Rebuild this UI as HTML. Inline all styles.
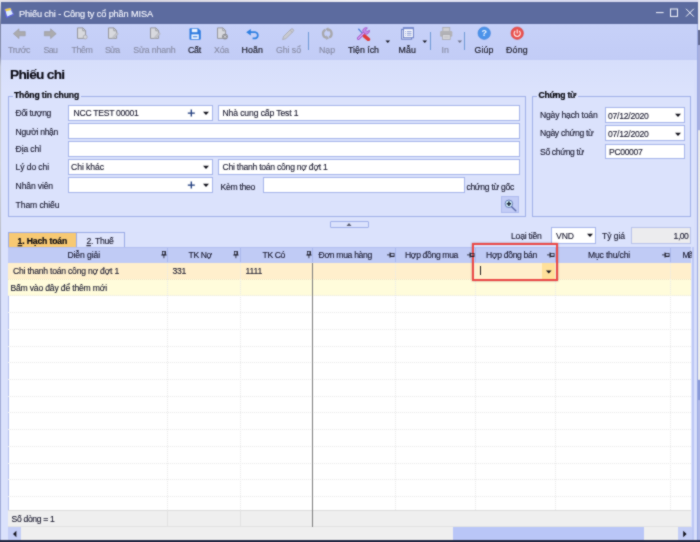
<!DOCTYPE html>
<html lang="vi"><head><meta charset="utf-8"><title>Phiếu chi - Công ty cổ phần MISA</title>
<style>
html,body{margin:0;padding:0;background:#e9e8ee;}
body{width:700px;height:542px;overflow:hidden;font-family:"Liberation Sans",sans-serif;}
#app{filter:url(#soft);position:relative;width:700px;height:542px;overflow:hidden;background:#e9e8ee;}
#app div,#app svg{position:absolute;box-sizing:border-box;}
.t{-webkit-text-stroke:0.12px currentColor;white-space:pre;font-family:"Liberation Sans",sans-serif;}
.t u{text-decoration:underline;text-underline-offset:1px;text-decoration-thickness:0.7px;}
.inp{background:#fff;border:1px solid #a6b5ea;}
.fs{border:1px solid #a0b0e8;}
.vsep{width:1px;background:#6f9ad6;}
.hd{background:#c0cbf5;border-right:1px solid #aab8ea;border-bottom:1px solid #aab8ea;border-top:1px solid #b4c0ee;}
.vl{width:0;border-left:1px dotted #e9e9e9;}
.hl{height:0;border-top:1px dotted #e9e9e9;}

</style></head>
<body>
<svg width="0" height="0" style="position:absolute"><defs><filter id="soft" x="0" y="0" width="100%" height="100%" color-interpolation-filters="sRGB"><feConvolveMatrix order="3" kernelMatrix="1 2 1 2 12 2 1 2 1" divisor="24" edgeMode="duplicate" preserveAlpha="true"/></filter></defs></svg>
<div id="app">
<!-- outside strips -->
<div style="left:0;top:0;width:700px;height:2.2px;background:linear-gradient(90deg,#e4e2ea,#d9d6e2 4%,#cfcbd9 10%,#e8e7ee 42%,#eeeef4 50%,#d9dbf0 75%,#d6d8ee)"></div>
<div style="left:0;top:2px;width:1.2px;height:540px;background:linear-gradient(#e4e4ec 0,#8088a8 4%,#8890ac 10%,#c4c8d6 12%,#cfd3dc 30%,#b8bcc8 45%,#a3add6 60%,#a0abd8)"></div>
<div style="left:1px;top:24px;width:0.9px;height:517px;background:#9ba8da"></div>
<div style="left:697.8px;top:0;width:2.2px;height:542px;background:linear-gradient(#e8e8f0 0,#e8e8f0 5.5%,#646c94 5.6%,#646c94 8.3%,#a8b0e0 8.4%,#a8b0e0 24%,#e9e9e9 24.1%,#ececec 70%,#8898d8 70.1%,#8898d8 73.8%,#b0b8e8 73.9%,#b0b8e8 100%)"></div>
<!-- window -->
<div id="win" style="left:1.2px;top:1.8px;width:696.5px;height:538.9px;background:#dbe2fc"></div>
<div id="titlebar" style="left:1.2px;top:2px;width:696.5px;height:21.6px;background:#5c6b9f"></div>
<div id="toolbar" style="left:1.2px;top:23.6px;width:696.5px;height:36px;background:linear-gradient(#c7d1f8,#c2ccf6)"></div>
<div style="left:1.2px;top:59.6px;width:696.5px;height:30px;background:linear-gradient(#d6defb,#dbe2fc)"></div>
<!-- title icon -->
<svg style="left:3px;top:6px" width="12" height="13" viewBox="0 0 12 13"><path d="M1.6 3.2L7.4 2L10.6 8.4L3.6 11.6Z" fill="#dcebff" stroke="#6a6fe0" stroke-width="0.9"/><path d="M1.6 3.2L7.4 2L8.3 4L2.3 5.4Z" fill="#f4d247"/><path d="M1.6 3.4L3.6 11.6L10.4 8.6" fill="none" stroke="#5a5fdc" stroke-width="1.1"/></svg>
<!-- window buttons -->
<svg style="left:650px;top:5px" width="50" height="16" viewBox="0 0 50 16"><g stroke="#f4f5fc" stroke-width="1" fill="none"><path d="M6 7.6H13.6"/><rect x="20.5" y="4" width="7" height="7.4"/><path d="M36 3.8L43.8 11.6M43.8 3.8L36 11.6"/></g></svg>
<!-- fieldsets -->
<div class="fs" style="left:8px;top:96px;width:518.2px;height:120.5px"></div>
<div style="left:12.5px;top:92px;width:68px;height:9px;background:#dbe2fc"></div>
<div class="fs" style="left:532.2px;top:96px;width:158.9px;height:120.5px"></div>
<div style="left:536.5px;top:92px;width:41px;height:9px;background:#dbe2fc"></div>
<!-- inputs left -->
<div class="inp" style="left:68px;top:105.3px;width:144.8px;height:15.6px"></div>
<div class="inp" style="left:217.6px;top:105.3px;width:302.2px;height:15.6px"></div>
<div class="inp" style="left:68px;top:123.3px;width:451.8px;height:15.6px"></div>
<div class="inp" style="left:68px;top:141.3px;width:451.8px;height:15.6px"></div>
<div class="inp" style="left:68px;top:159.4px;width:144.8px;height:15.6px"></div>
<div class="inp" style="left:217.6px;top:159.4px;width:302.2px;height:15.6px"></div>
<div class="inp" style="left:68px;top:177.4px;width:144.8px;height:15.6px"></div>
<div class="inp" style="left:263.2px;top:177.4px;width:201.6px;height:15.6px"></div>
<!-- inputs right -->
<div class="inp" style="left:605.2px;top:107.2px;width:79.8px;height:15.8px"></div>
<div class="inp" style="left:605.2px;top:125.4px;width:79.8px;height:15.8px"></div>
<div class="inp" style="left:605.2px;top:143.7px;width:79.8px;height:15.8px"></div>
<!-- combo glyphs -->
<svg style="left:186px;top:108px" width="26" height="11" viewBox="0 0 26 11"><path d="M5.3 1.6V8.6M1.8 5.1H8.8" stroke="#1d3a7c" stroke-width="1.3" fill="none"/><path d="M17 3.8H23L20 7Z" fill="#15151f"/></svg>
<svg style="left:186px;top:162px" width="26" height="11" viewBox="0 0 26 11"><path d="M17 3.8H23L20 7Z" fill="#15151f"/></svg>
<svg style="left:186px;top:180px" width="26" height="11" viewBox="0 0 26 11"><path d="M5.3 1.6V8.6M1.8 5.1H8.8" stroke="#1d3a7c" stroke-width="1.3" fill="none"/><path d="M17 3.8H23L20 7Z" fill="#15151f"/></svg>
<svg style="left:672px;top:110px" width="12" height="11" viewBox="0 0 12 11"><path d="M3 3.8H9L6 7Z" fill="#15151f"/></svg>
<svg style="left:672px;top:128.7px" width="12" height="11" viewBox="0 0 12 11"><path d="M3 3.8H9L6 7Z" fill="#15151f"/></svg>
<!-- magnifier button -->
<div style="left:501px;top:195.6px;width:17.8px;height:17.2px;background:#c2ccf6;border:1px solid #aebbee"></div>
<svg style="left:503px;top:197.5px" width="15" height="15" viewBox="0 0 15 15"><circle cx="5.9" cy="5.8" r="3.8" fill="#cdeefa" stroke="#6f80ba" stroke-width="1"/><path d="M3.7 5.8H8.1M5.9 3.6V8" stroke="#1e2638" stroke-width="1.5"/><path d="M8.6 8.8L12.8 12.8" stroke="#5a6aa8" stroke-width="1.4" stroke-linecap="round"/></svg>
<!-- collapse button -->
<div style="left:330px;top:221px;width:38.6px;height:6.6px;background:#dbe2fc;border:1px solid #9fafe8;border-radius:1px"></div>
<svg style="left:345px;top:222px" width="8" height="5" viewBox="0 0 8 5"><path d="M1.5 4L4 1L6.5 4Z" fill="#555a70"/></svg>
<!-- currency -->
<div class="inp" style="left:550.6px;top:227.4px;width:45.6px;height:16.2px"></div>
<svg style="left:583.6px;top:230.4px" width="12" height="11" viewBox="0 0 12 11"><path d="M3 3.8H9L6 7Z" fill="#15151f"/></svg>
<div style="left:631px;top:227.4px;width:60.2px;height:16.2px;background:#ececee;border:1px solid #b9c3ea"></div>
<!-- tabs -->
<div style="left:7.6px;top:232.2px;width:68.7px;height:15px;background:#f7c973;border:1px solid #9aabe6;border-bottom:none;border-right:none"></div>
<div style="left:76.3px;top:232.2px;width:48.5px;height:15px;background:#dee4fc;border:1px solid #9aabe6;border-bottom:none"></div>
<!-- grid -->
<div id="grid" style="left:7.6px;top:246.8px;width:683.9px;height:293.8px;background:#fff;border-left:1px solid #b4c0ee"></div>
<!-- grid header cells -->
<div style="left:8.4px;top:246.8px;width:683.1px;height:15.8px;background:#c0cbf5;border-top:1px solid #b3bff0"></div>
<div style="left:167.1px;top:247.5px;width:1px;height:14.6px;background:#a9b7ec"></div>
<div style="left:239.5px;top:247.5px;width:1px;height:14.6px;background:#a9b7ec"></div>
<div style="left:311.8px;top:247.5px;width:1px;height:14.6px;background:#a9b7ec"></div>
<div style="left:395.1px;top:247.5px;width:1px;height:14.6px;background:#a9b7ec"></div>
<div style="left:475.1px;top:247.5px;width:1px;height:14.6px;background:#a9b7ec"></div>
<div style="left:555.0px;top:247.5px;width:1px;height:14.6px;background:#a9b7ec"></div>
<div style="left:669.5px;top:247.5px;width:1px;height:14.6px;background:#a9b7ec"></div>
<!-- rows -->
<div style="left:8.4px;top:262.6px;width:683.1px;height:16.2px;background:#ffefcc"></div>
<div style="left:8.4px;top:278.8px;width:683.1px;height:16.8px;background:#fffcdb"></div>
<!-- dotted h lines -->
<div class="hl" style="left:8.4px;top:278.6px;width:683px;border-top-color:#efe3c4"></div>
<div class="hl" style="left:8.4px;top:295.4px;width:683px"></div>
<div class="hl" style="left:8.4px;top:312.2px;width:683px"></div>
<div class="hl" style="left:8.4px;top:328.9px;width:683px"></div>
<div class="hl" style="left:8.4px;top:345.6px;width:683px"></div>
<div class="hl" style="left:8.4px;top:362.3px;width:683px"></div>
<div class="hl" style="left:8.4px;top:379px;width:683px"></div>
<div class="hl" style="left:8.4px;top:395.7px;width:683px"></div>
<div class="hl" style="left:8.4px;top:412.4px;width:683px"></div>
<div class="hl" style="left:8.4px;top:429.1px;width:683px"></div>
<div class="hl" style="left:8.4px;top:445.8px;width:683px"></div>
<div class="hl" style="left:8.4px;top:462.5px;width:683px"></div>
<div class="hl" style="left:8.4px;top:479.2px;width:683px"></div>
<div class="hl" style="left:8.4px;top:495.9px;width:683px"></div>
<!-- dotted v lines -->
<div class="vl" style="left:167.1px;top:262.6px;height:247.5px"></div>
<div class="vl" style="left:239.5px;top:262.6px;height:247.5px"></div>
<div class="vl" style="left:395.1px;top:262.6px;height:247.5px"></div>
<div class="vl" style="left:475.1px;top:262.6px;height:247.5px"></div>
<div class="vl" style="left:555.0px;top:262.6px;height:247.5px"></div>
<div class="vl" style="left:669.5px;top:262.6px;height:247.5px"></div>
<!-- footer -->
<div style="left:8.4px;top:510px;width:683.1px;height:17px;background:#efefef;border-top:1px solid #dcdcdc;border-bottom:1px solid #e2e2e2"></div>
<div style="left:167.1px;top:510px;width:1px;height:17px;background:#e2e2e2"></div>
<div style="left:239.5px;top:510px;width:1px;height:17px;background:#e2e2e2"></div>
<!-- frozen column line -->
<div style="left:312px;top:262.6px;width:1.2px;height:264.4px;background:#7d7d7d"></div>
<!-- scrollbar -->
<div style="left:8.4px;top:527px;width:683.1px;height:13.6px;background:#efefef"></div>
<div style="left:8.4px;top:527px;width:12.8px;height:13.6px;background:#c4cef6"></div>
<div style="left:678px;top:527px;width:13.5px;height:13.6px;background:#c4cef6"></div>
<div style="left:452.5px;top:527px;width:191.5px;height:13.6px;background:#b9c6f7"></div>
<svg style="left:12px;top:530px" width="6" height="8" viewBox="0 0 6 8"><path d="M4.4 0.8V7.2L1 4Z" fill="#15151f"/></svg>
<svg style="left:682px;top:530px" width="6" height="8" viewBox="0 0 6 8"><path d="M1.2 0.8V7.2L4.6 4Z" fill="#15151f"/></svg>
<!-- right band -->
<div style="left:691.5px;top:247px;width:2.4px;height:293.6px;background:#bdc8f5"></div>
<div style="left:693.8px;top:61px;width:3.4px;height:479.6px;background:#d8dffb"></div>
<div style="left:697.2px;top:23.8px;width:0.6px;height:516.8px;background:#9aa9e2"></div>

<!-- cell editor -->
<div style="left:476.1px;top:262.6px;width:79.4px;height:16px;background:#ffefcc"></div>
<div style="left:542.4px;top:262.6px;width:13.1px;height:16px;background:#ffe09a"></div>
<div style="left:480px;top:266px;width:1px;height:9px;background:#222"></div>
<svg style="left:545px;top:268.5px" width="8" height="6" viewBox="0 0 8 6"><path d="M1 1.5H6.6L3.8 4.6Z" fill="#15151f"/></svg>
<!-- red highlight -->
<div style="left:472.2px;top:243.4px;width:85.8px;height:37.6px;border:2.8px solid #ea4a48;box-shadow:0 0 2px rgba(120,40,40,.45)"></div>
<!-- toolbar icons -->
<svg style="left:12px;top:27px" width="16" height="14" viewBox="0 0 16 14"><path d="M1.4 6.7L7 1.8V4.6H13.2V8.8H7V11.6Z" fill="#ababae" stroke="#97979b" stroke-width="0.6"/></svg>
<svg style="left:42px;top:27px" width="16" height="14" viewBox="0 0 16 14"><path d="M14.2 6.7L8.6 1.8V4.6H2.4V8.8H8.6V11.6Z" fill="#ababae" stroke="#97979b" stroke-width="0.6"/></svg>
<!-- Thêm -->
<svg style="left:75px;top:26px" width="16" height="15" viewBox="0 0 16 15"><path d="M2.5 1.9H8L10.6 4.6V12.4H2.5Z" fill="#d8d9de" stroke="#97989e" stroke-width="1"/><path d="M7.8 2V4.8H10.5" fill="none" stroke="#97989e" stroke-width="0.9"/><circle cx="10.2" cy="11" r="2" fill="#d6d7dc" stroke="#a4a5ab" stroke-width="0.8"/></svg>
<!-- Sửa -->
<svg style="left:106px;top:26px" width="16" height="15" viewBox="0 0 16 15"><path d="M2.5 1.9H8L10.6 4.6V12.4H2.5Z" fill="#d8d9de" stroke="#97989e" stroke-width="1"/><path d="M7.8 2V4.8H10.5" fill="none" stroke="#97989e" stroke-width="0.9"/><path d="M6.5 12.6L7.2 10.4L11 6.4L12.4 7.7L8.6 11.8Z" fill="#c4c5cb" stroke="#a9aab0" stroke-width="0.5"/></svg>
<!-- Sửa nhanh -->
<svg style="left:147.5px;top:26px" width="16" height="15" viewBox="0 0 16 15"><path d="M2.5 1.9H8L10.6 4.6V12.4H2.5Z" fill="#d8d9de" stroke="#97989e" stroke-width="1"/><path d="M7.8 2V4.8H10.5" fill="none" stroke="#97989e" stroke-width="0.9"/><path d="M6.5 12.6L7.2 10.4L11 6.4L12.4 7.7L8.6 11.8Z" fill="#c4c5cb" stroke="#a9aab0" stroke-width="0.5"/></svg>
<!-- Cất (save) -->
<svg style="left:188px;top:27px" width="14" height="14" viewBox="0 0 14 14"><path d="M1.5 2.2Q1.5 1.2 2.5 1.2H10.2L12.8 3.8V11.7Q12.8 12.7 11.8 12.7H2.5Q1.5 12.7 1.5 11.7Z" fill="#2f7de0"/><rect x="3.8" y="1.9" width="5.6" height="3.3" fill="#eaf2ff"/><rect x="3.4" y="7.4" width="7.4" height="4.6" fill="#f4f8ff"/><rect x="4.8" y="9" width="4.6" height="1.4" fill="#5e9bea"/></svg>
<!-- Xóa -->
<svg style="left:214.5px;top:26px" width="16" height="15" viewBox="0 0 16 15"><path d="M2.5 1.9H8L10.6 4.6V12.4H2.5Z" fill="#d8d9de" stroke="#97989e" stroke-width="1"/><path d="M7.8 2V4.8H10.5" fill="none" stroke="#97989e" stroke-width="0.9"/><circle cx="10" cy="10.6" r="2.9" fill="#8d8e94"/><path d="M8.8 9.4L11.2 11.8M11.2 9.4L8.8 11.8" stroke="#e8e8ec" stroke-width="0.9"/></svg>
<!-- Hoãn (undo) -->
<svg style="left:244.5px;top:28px" width="16" height="12" viewBox="0 0 16 12"><path d="M4.4 4.2H10.4A3.2 3.2 0 0 1 10.4 10.4H7.6" fill="none" stroke="#2f80e2" stroke-width="1.7"/><path d="M1.2 4.2L5.8 0.9V7.5Z" fill="#2f80e2"/></svg>
<!-- Ghi sổ (pencil) -->
<svg style="left:281px;top:26.5px" width="15" height="14" viewBox="0 0 15 14"><path d="M1.6 12.6L2.6 9.3L9.9 2.2Q11 1.2 12.2 2.3Q13.2 3.4 12.2 4.5L4.9 11.6Z" fill="#c9cad0" stroke="#a6a7ad" stroke-width="0.8"/><path d="M9 3.1L11.3 5.4" stroke="#a6a7ad" stroke-width="0.7"/></svg>
<div class="vsep" style="left:308px;top:32.2px;height:18px"></div>
<!-- Nạp (refresh) -->
<svg style="left:320px;top:27px" width="15" height="14" viewBox="0 0 15 14"><g fill="none" stroke="#a7a7ab" stroke-width="2.3"><path d="M5.48 2.70A4.3 4.3 0 0 0 6.55 10.83"/><path d="M9.12 10.50A4.3 4.3 0 0 0 8.05 2.37"/></g><path d="M6.25 8.23V13.03L9.15 11.13Z" fill="#a7a7ab"/><path d="M8.35 0.17V4.97L5.45 2.07Z" fill="#a7a7ab"/></svg>
<!-- Tiện ích (tools) -->
<svg style="left:356px;top:26.5px" width="15" height="14" viewBox="0 0 15 14"><path d="M2.8 2.2L8.4 8.6" stroke="#5a86d8" stroke-width="1.3" stroke-linecap="round"/><path d="M1.9 1.7L3.6 1.9L3.2 3.4Z" fill="#5a86d8"/><path d="M2.4 11.4L8.6 5.4" stroke="#a658cc" stroke-width="3" stroke-linecap="round"/><path d="M2.4 11.4L8.6 5.4" stroke="#dcb0f2" stroke-width="1.2" stroke-linecap="round"/><path d="M6.6 3.9A3.6 3.6 0 0 1 11.4 0.9L9.5 3L10.9 4.6L13.5 3.3A3.6 3.6 0 0 1 9 7.1Z" fill="#c68ae6" stroke="#a050c8" stroke-width="0.8"/><path d="M8.6 9.2L12.4 12.4" stroke="#e03a3a" stroke-width="3.6" stroke-linecap="round"/></svg>
<svg style="left:385px;top:40.3px" width="6" height="4" viewBox="0 0 6 4"><path d="M0.5 0.4H5.1L2.8 3Z" fill="#15151f"/></svg>
<!-- Mẫu -->
<svg style="left:400px;top:26px" width="16" height="15" viewBox="0 0 16 15"><rect x="1.6" y="3.4" width="10" height="9.8" fill="#e6ebfb" stroke="#6a7ec4" stroke-width="1"/><rect x="3.4" y="1.7" width="10" height="10" fill="#fbfcff" stroke="#6a7ec4" stroke-width="1"/><rect x="3.4" y="1.4" width="10" height="1.8" fill="#7a8ed0"/><path d="M5.2 5.6H6.2M7 5.6H11.6M5.2 7.4H6.2M7 7.4H11.6M5.2 9.2H6.2M7 9.2H11.6" stroke="#7f92cf" stroke-width="0.9"/></svg>
<svg style="left:421.8px;top:40.3px" width="6" height="4" viewBox="0 0 6 4"><path d="M0.5 0.4H5.1L2.8 3Z" fill="#15151f"/></svg>
<div class="vsep" style="left:430px;top:32.2px;height:18px"></div>
<!-- In (printer) -->
<svg style="left:438.5px;top:26px" width="15" height="15" viewBox="0 0 15 15"><rect x="3.8" y="1.4" width="7" height="4.4" fill="#cfcfd3" stroke="#a9a9ad" stroke-width="0.8"/><rect x="1.1" y="5" width="12.2" height="5.8" rx="1.2" fill="#b2b2b6"/><rect x="3.4" y="8.6" width="7.8" height="4.8" fill="#d6d6da" stroke="#a9a9ad" stroke-width="0.8"/><path d="M5 11H9.6" stroke="#b6b6ba" stroke-width="0.8"/></svg>
<svg style="left:456.5px;top:40.3px" width="6" height="4" viewBox="0 0 6 4"><path d="M0.5 0.4H5.1L2.8 3Z" fill="#70748a"/></svg>
<div class="vsep" style="left:464px;top:32.2px;height:18px"></div>
<!-- Giúp -->
<svg style="left:476.5px;top:26.2px" width="15" height="15" viewBox="0 0 15 15"><circle cx="7.2" cy="7.2" r="6.2" fill="#4b93ea" stroke="#3f7fd6" stroke-width="0.6"/><text x="7.2" y="10.4" text-anchor="middle" font-family="Liberation Sans, sans-serif" font-size="9" font-weight="700" fill="#eef5ff">?</text></svg>
<!-- Đóng -->
<svg style="left:510.2px;top:26.2px" width="15" height="15" viewBox="0 0 15 15"><circle cx="7.2" cy="7.2" r="6.2" fill="#e9524f" stroke="#d8423f" stroke-width="0.6"/><path d="M5.2 5A3.1 3.1 0 1 0 9.2 5" fill="none" stroke="#fff1f0" stroke-width="1.1"/><path d="M7.2 3.4V7.4" stroke="#fff1f0" stroke-width="1.1"/></svg>
<!-- pins -->
<svg style="left:160.5px;top:251.2px" width="6" height="8" viewBox="0 0 6 8"><rect x="1.4" y="0.6" width="3" height="3.2" fill="none" stroke="#1a1a26" stroke-width="0.7"/><path d="M4.1 0.6V3.8" stroke="#1a1a26" stroke-width="1.1"/><path d="M0.3 4H5.6" stroke="#1a1a26" stroke-width="0.9"/><path d="M2.9 4V7.2" stroke="#1a1a26" stroke-width="0.8"/></svg>
<svg style="left:233.0px;top:251.2px" width="6" height="8" viewBox="0 0 6 8"><rect x="1.4" y="0.6" width="3" height="3.2" fill="none" stroke="#1a1a26" stroke-width="0.7"/><path d="M4.1 0.6V3.8" stroke="#1a1a26" stroke-width="1.1"/><path d="M0.3 4H5.6" stroke="#1a1a26" stroke-width="0.9"/><path d="M2.9 4V7.2" stroke="#1a1a26" stroke-width="0.8"/></svg>
<svg style="left:305.7px;top:251.2px" width="6" height="8" viewBox="0 0 6 8"><rect x="1.4" y="0.6" width="3" height="3.2" fill="none" stroke="#1a1a26" stroke-width="0.7"/><path d="M4.1 0.6V3.8" stroke="#1a1a26" stroke-width="1.1"/><path d="M0.3 4H5.6" stroke="#1a1a26" stroke-width="0.9"/><path d="M2.9 4V7.2" stroke="#1a1a26" stroke-width="0.8"/></svg>
<svg style="left:387.4px;top:251.5px" width="8" height="6" viewBox="0 0 8 6"><path d="M0 2.9H3" stroke="#1a1a26" stroke-width="0.8"/><path d="M3 0.5V5.6" stroke="#1a1a26" stroke-width="0.9"/><rect x="3.4" y="1.5" width="3.7" height="3.1" fill="none" stroke="#1a1a26" stroke-width="0.7"/><path d="M3.4 4.3H7.3" stroke="#1a1a26" stroke-width="1.1"/></svg>
<svg style="left:467.4px;top:251.5px" width="8" height="6" viewBox="0 0 8 6"><path d="M0 2.9H3" stroke="#1a1a26" stroke-width="0.8"/><path d="M3 0.5V5.6" stroke="#1a1a26" stroke-width="0.9"/><rect x="3.4" y="1.5" width="3.7" height="3.1" fill="none" stroke="#1a1a26" stroke-width="0.7"/><path d="M3.4 4.3H7.3" stroke="#1a1a26" stroke-width="1.1"/></svg>
<svg style="left:547.2px;top:251.5px" width="8" height="6" viewBox="0 0 8 6"><path d="M0 2.9H3" stroke="#1a1a26" stroke-width="0.8"/><path d="M3 0.5V5.6" stroke="#1a1a26" stroke-width="0.9"/><rect x="3.4" y="1.5" width="3.7" height="3.1" fill="none" stroke="#1a1a26" stroke-width="0.7"/><path d="M3.4 4.3H7.3" stroke="#1a1a26" stroke-width="1.1"/></svg>
<svg style="left:661.9px;top:251.5px" width="8" height="6" viewBox="0 0 8 6"><path d="M0 2.9H3" stroke="#1a1a26" stroke-width="0.8"/><path d="M3 0.5V5.6" stroke="#1a1a26" stroke-width="0.9"/><rect x="3.4" y="1.5" width="3.7" height="3.1" fill="none" stroke="#1a1a26" stroke-width="0.7"/><path d="M3.4 4.3H7.3" stroke="#1a1a26" stroke-width="1.1"/></svg>
<!-- bottom edge -->
<div style="left:0;top:539.7px;width:700px;height:1px;background:#c3cbf2"></div>
<div style="left:0;top:540.4px;width:700px;height:2px;background:#252a45"></div>

<div class="t" style="left:19.0px;top:8px;font-size:9.2px;line-height:12px;color:#f6f7ff;letter-spacing:-0.122px;">Phiếu chi - Công ty cổ phần MISA</div>
<div class="t" style="left:8.0px;top:44px;font-size:8.8px;line-height:12px;color:#878ba3;letter-spacing:-0.409px;">Trước</div>
<div class="t" style="left:43.6px;top:44px;font-size:8.8px;line-height:12px;color:#878ba3;letter-spacing:-0.619px;">Sau</div>
<div class="t" style="left:71.4px;top:44px;font-size:8.8px;line-height:12px;color:#878ba3;letter-spacing:-0.325px;">Thêm</div>
<div class="t" style="left:105.0px;top:44px;font-size:8.8px;line-height:12px;color:#878ba3;letter-spacing:-0.752px;">Sửa</div>
<div class="t" style="left:133.3px;top:44px;font-size:8.8px;line-height:12px;color:#878ba3;letter-spacing:-0.163px;">Sửa nhanh</div>
<div class="t" style="left:188.0px;top:44px;font-size:8.8px;line-height:12px;color:#1c1c28;letter-spacing:-0.234px;-webkit-text-stroke:0.18px #1c1c28;">Cất</div>
<div class="t" style="left:214.0px;top:44px;font-size:8.8px;line-height:12px;color:#878ba3;letter-spacing:-0.219px;">Xóa</div>
<div class="t" style="left:241.6px;top:44px;font-size:8.8px;line-height:12px;color:#1c1c28;letter-spacing:0.092px;-webkit-text-stroke:0.18px #1c1c28;">Hoãn</div>
<div class="t" style="left:276.0px;top:44px;font-size:8.8px;line-height:12px;color:#878ba3;letter-spacing:-0.073px;">Ghi sổ</div>
<div class="t" style="left:319.0px;top:44px;font-size:8.8px;line-height:12px;color:#878ba3;letter-spacing:-0.047px;">Nạp</div>
<div class="t" style="left:348.0px;top:44px;font-size:8.8px;line-height:12px;color:#1c1c28;letter-spacing:0.004px;-webkit-text-stroke:0.18px #1c1c28;">Tiện ích</div>
<div class="t" style="left:398.4px;top:44px;font-size:8.8px;line-height:12px;color:#1c1c28;letter-spacing:0.158px;-webkit-text-stroke:0.18px #1c1c28;">Mẫu</div>
<div class="t" style="left:441.6px;top:44px;font-size:8.8px;line-height:12px;color:#878ba3;letter-spacing:0.028px;">In</div>
<div class="t" style="left:474.4px;top:44px;font-size:8.8px;line-height:12px;color:#1c1c28;letter-spacing:0.152px;-webkit-text-stroke:0.18px #1c1c28;">Giúp</div>
<div class="t" style="left:506.0px;top:44px;font-size:8.8px;line-height:12px;color:#1c1c28;letter-spacing:0.242px;-webkit-text-stroke:0.18px #1c1c28;">Đóng</div>
<div class="t" style="left:10.0px;top:66px;font-size:13.7px;line-height:17px;font-weight:700;color:#0a0a14;letter-spacing:-0.718px;">Phiếu chi</div>
<div class="t" style="left:14.0px;top:89px;font-size:8.6px;line-height:12px;font-weight:700;color:#08080f;letter-spacing:-0.154px;-webkit-text-stroke:0.2px #08080f;transform:scaleY(1.13);transform-origin:0 9px;">Thông tin chung</div>
<div class="t" style="left:538.5px;top:89px;font-size:8.6px;line-height:12px;font-weight:700;color:#08080f;letter-spacing:-0.270px;-webkit-text-stroke:0.2px #08080f;transform:scaleY(1.13);transform-origin:0 9px;">Chứng từ</div>
<div class="t" style="left:15.6px;top:107px;font-size:8.6px;line-height:12px;color:#17172c;letter-spacing:-0.358px;transform:scaleY(1.1);transform-origin:0 9px;">Đối tượng</div>
<div class="t" style="left:15.6px;top:126px;font-size:8.6px;line-height:12px;color:#17172c;letter-spacing:-0.340px;transform:scaleY(1.1);transform-origin:0 9px;">Người nhận</div>
<div class="t" style="left:15.6px;top:143px;font-size:8.6px;line-height:12px;color:#17172c;letter-spacing:-0.126px;transform:scaleY(1.1);transform-origin:0 9px;">Địa chỉ</div>
<div class="t" style="left:15.6px;top:161px;font-size:8.6px;line-height:12px;color:#17172c;letter-spacing:-0.112px;transform:scaleY(1.1);transform-origin:0 9px;">Lý do chi</div>
<div class="t" style="left:15.6px;top:180px;font-size:8.6px;line-height:12px;color:#17172c;letter-spacing:-0.145px;transform:scaleY(1.1);transform-origin:0 9px;">Nhân viên</div>
<div class="t" style="left:15.6px;top:199px;font-size:8.6px;line-height:12px;color:#17172c;letter-spacing:-0.111px;transform:scaleY(1.1);transform-origin:0 9px;">Tham chiếu</div>
<div class="t" style="left:73.6px;top:107px;font-size:8.6px;line-height:12px;color:#17172c;letter-spacing:-0.282px;transform:scaleY(1.1);transform-origin:0 9px;">NCC TEST 00001</div>
<div class="t" style="left:222.5px;top:107px;font-size:8.6px;line-height:12px;color:#17172c;letter-spacing:-0.116px;transform:scaleY(1.1);transform-origin:0 9px;">Nhà cung cấp Test 1</div>
<div class="t" style="left:71.0px;top:161px;font-size:8.6px;line-height:12px;color:#17172c;letter-spacing:-0.055px;transform:scaleY(1.1);transform-origin:0 9px;">Chi khác</div>
<div class="t" style="left:222.5px;top:161px;font-size:8.6px;line-height:12px;color:#17172c;letter-spacing:-0.250px;transform:scaleY(1.1);transform-origin:0 9px;">Chi thanh toán công nợ đợt 1</div>
<div class="t" style="left:220.6px;top:181px;font-size:8.6px;line-height:12px;color:#17172c;letter-spacing:-0.300px;transform:scaleY(1.1);transform-origin:0 9px;">Kèm theo</div>
<div class="t" style="left:466.4px;top:181px;font-size:8.6px;line-height:12px;color:#17172c;letter-spacing:-0.298px;transform:scaleY(1.1);transform-origin:0 9px;">chứng từ gốc</div>
<div class="t" style="left:540.0px;top:109px;font-size:8.6px;line-height:12px;color:#17172c;letter-spacing:-0.193px;transform:scaleY(1.1);transform-origin:0 9px;">Ngày hạch toán</div>
<div class="t" style="left:540.0px;top:127px;font-size:8.6px;line-height:12px;color:#17172c;letter-spacing:-0.298px;transform:scaleY(1.1);transform-origin:0 9px;">Ngày chứng từ</div>
<div class="t" style="left:540.0px;top:146px;font-size:8.6px;line-height:12px;color:#17172c;letter-spacing:-0.348px;transform:scaleY(1.1);transform-origin:0 9px;">Số chứng từ</div>
<div class="t" style="left:608.0px;top:110px;font-size:8.6px;line-height:12px;color:#17172c;letter-spacing:-0.242px;transform:scaleY(1.1);transform-origin:0 9px;">07/12/2020</div>
<div class="t" style="left:608.0px;top:128px;font-size:8.6px;line-height:12px;color:#17172c;letter-spacing:-0.242px;transform:scaleY(1.1);transform-origin:0 9px;">07/12/2020</div>
<div class="t" style="left:609.0px;top:146px;font-size:8.6px;line-height:12px;color:#17172c;letter-spacing:-0.349px;transform:scaleY(1.1);transform-origin:0 9px;">PC00007</div>
<div class="t" style="left:511.0px;top:230px;font-size:8.6px;line-height:12px;color:#17172c;letter-spacing:-0.211px;transform:scaleY(1.1);transform-origin:0 9px;">Loại tiền</div>
<div class="t" style="left:556.0px;top:230px;font-size:8.6px;line-height:12px;color:#17172c;letter-spacing:-0.052px;transform:scaleY(1.1);transform-origin:0 9px;">VND</div>
<div class="t" style="left:602.0px;top:230px;font-size:8.6px;line-height:12px;color:#17172c;letter-spacing:-0.068px;transform:scaleY(1.1);transform-origin:0 9px;">Tỷ giá</div>
<div class="t" style="left:673.6px;top:230px;font-size:8.6px;line-height:12px;color:#17172c;letter-spacing:-0.484px;transform:scaleY(1.1);transform-origin:0 9px;">1,00</div>
<div class="t" style="left:17.6px;top:235px;font-size:8.6px;line-height:12px;font-weight:700;color:#08080f;letter-spacing:-0.142px;-webkit-text-stroke:0.2px #08080f;transform:scaleY(1.13);transform-origin:0 9px;"><u>1</u>. Hạch toán</div>
<div class="t" style="left:86.4px;top:235px;font-size:8.6px;line-height:12px;color:#17172c;letter-spacing:-0.257px;transform:scaleY(1.1);transform-origin:0 9px;"><u>2</u>. Thuế</div>
<div class="t" style="left:67.4px;top:249px;font-size:8.6px;line-height:12px;color:#17172c;letter-spacing:-0.095px;transform:scaleY(1.1);transform-origin:0 9px;">Diễn giải</div>
<div class="t" style="left:188.6px;top:249px;font-size:8.6px;line-height:12px;color:#17172c;letter-spacing:-0.444px;transform:scaleY(1.1);transform-origin:0 9px;">TK Nợ</div>
<div class="t" style="left:262.5px;top:249px;font-size:8.6px;line-height:12px;color:#17172c;letter-spacing:-0.372px;transform:scaleY(1.1);transform-origin:0 9px;">TK Có</div>
<div class="t" style="left:318.6px;top:249px;font-size:8.6px;line-height:12px;color:#17172c;letter-spacing:-0.320px;transform:scaleY(1.1);transform-origin:0 9px;">Đơn mua hàng</div>
<div class="t" style="left:405.0px;top:249px;font-size:8.6px;line-height:12px;color:#17172c;letter-spacing:-0.353px;transform:scaleY(1.1);transform-origin:0 9px;">Hợp đồng mua</div>
<div class="t" style="left:486.0px;top:249px;font-size:8.6px;line-height:12px;color:#17172c;letter-spacing:-0.322px;transform:scaleY(1.1);transform-origin:0 9px;">Hợp đồng bán</div>
<div class="t" style="left:588.0px;top:249px;font-size:8.6px;line-height:12px;color:#17172c;letter-spacing:-0.178px;transform:scaleY(1.1);transform-origin:0 9px;">Mục thu/chi</div>
<div class="t" style="left:682.4px;top:249px;font-size:8.6px;line-height:12px;color:#17172c;letter-spacing:-0.927px;width:9.2px;overflow:hidden;transform:scaleY(1.1);transform-origin:0 9px;">Mã</div>
<div class="t" style="left:13.0px;top:265px;font-size:8.6px;line-height:12px;color:#17172c;letter-spacing:-0.218px;transform:scaleY(1.1);transform-origin:0 9px;">Chi thanh toán công nợ đợt 1</div>
<div class="t" style="left:172.5px;top:265px;font-size:8.6px;line-height:12px;color:#17172c;letter-spacing:-0.281px;transform:scaleY(1.1);transform-origin:0 9px;">331</div>
<div class="t" style="left:245.4px;top:265px;font-size:8.6px;line-height:12px;color:#17172c;letter-spacing:-0.101px;transform:scaleY(1.1);transform-origin:0 9px;">1111</div>
<div class="t" style="left:10.4px;top:282px;font-size:8.6px;line-height:12px;color:#17172c;letter-spacing:-0.178px;transform:scaleY(1.1);transform-origin:0 9px;">Bấm vào đây để thêm mới</div>
<div class="t" style="left:11.6px;top:513px;font-size:8.6px;line-height:12px;color:#17172c;letter-spacing:-0.345px;transform:scaleY(1.1);transform-origin:0 9px;">Số dòng = 1</div>
</div>
</body></html>
